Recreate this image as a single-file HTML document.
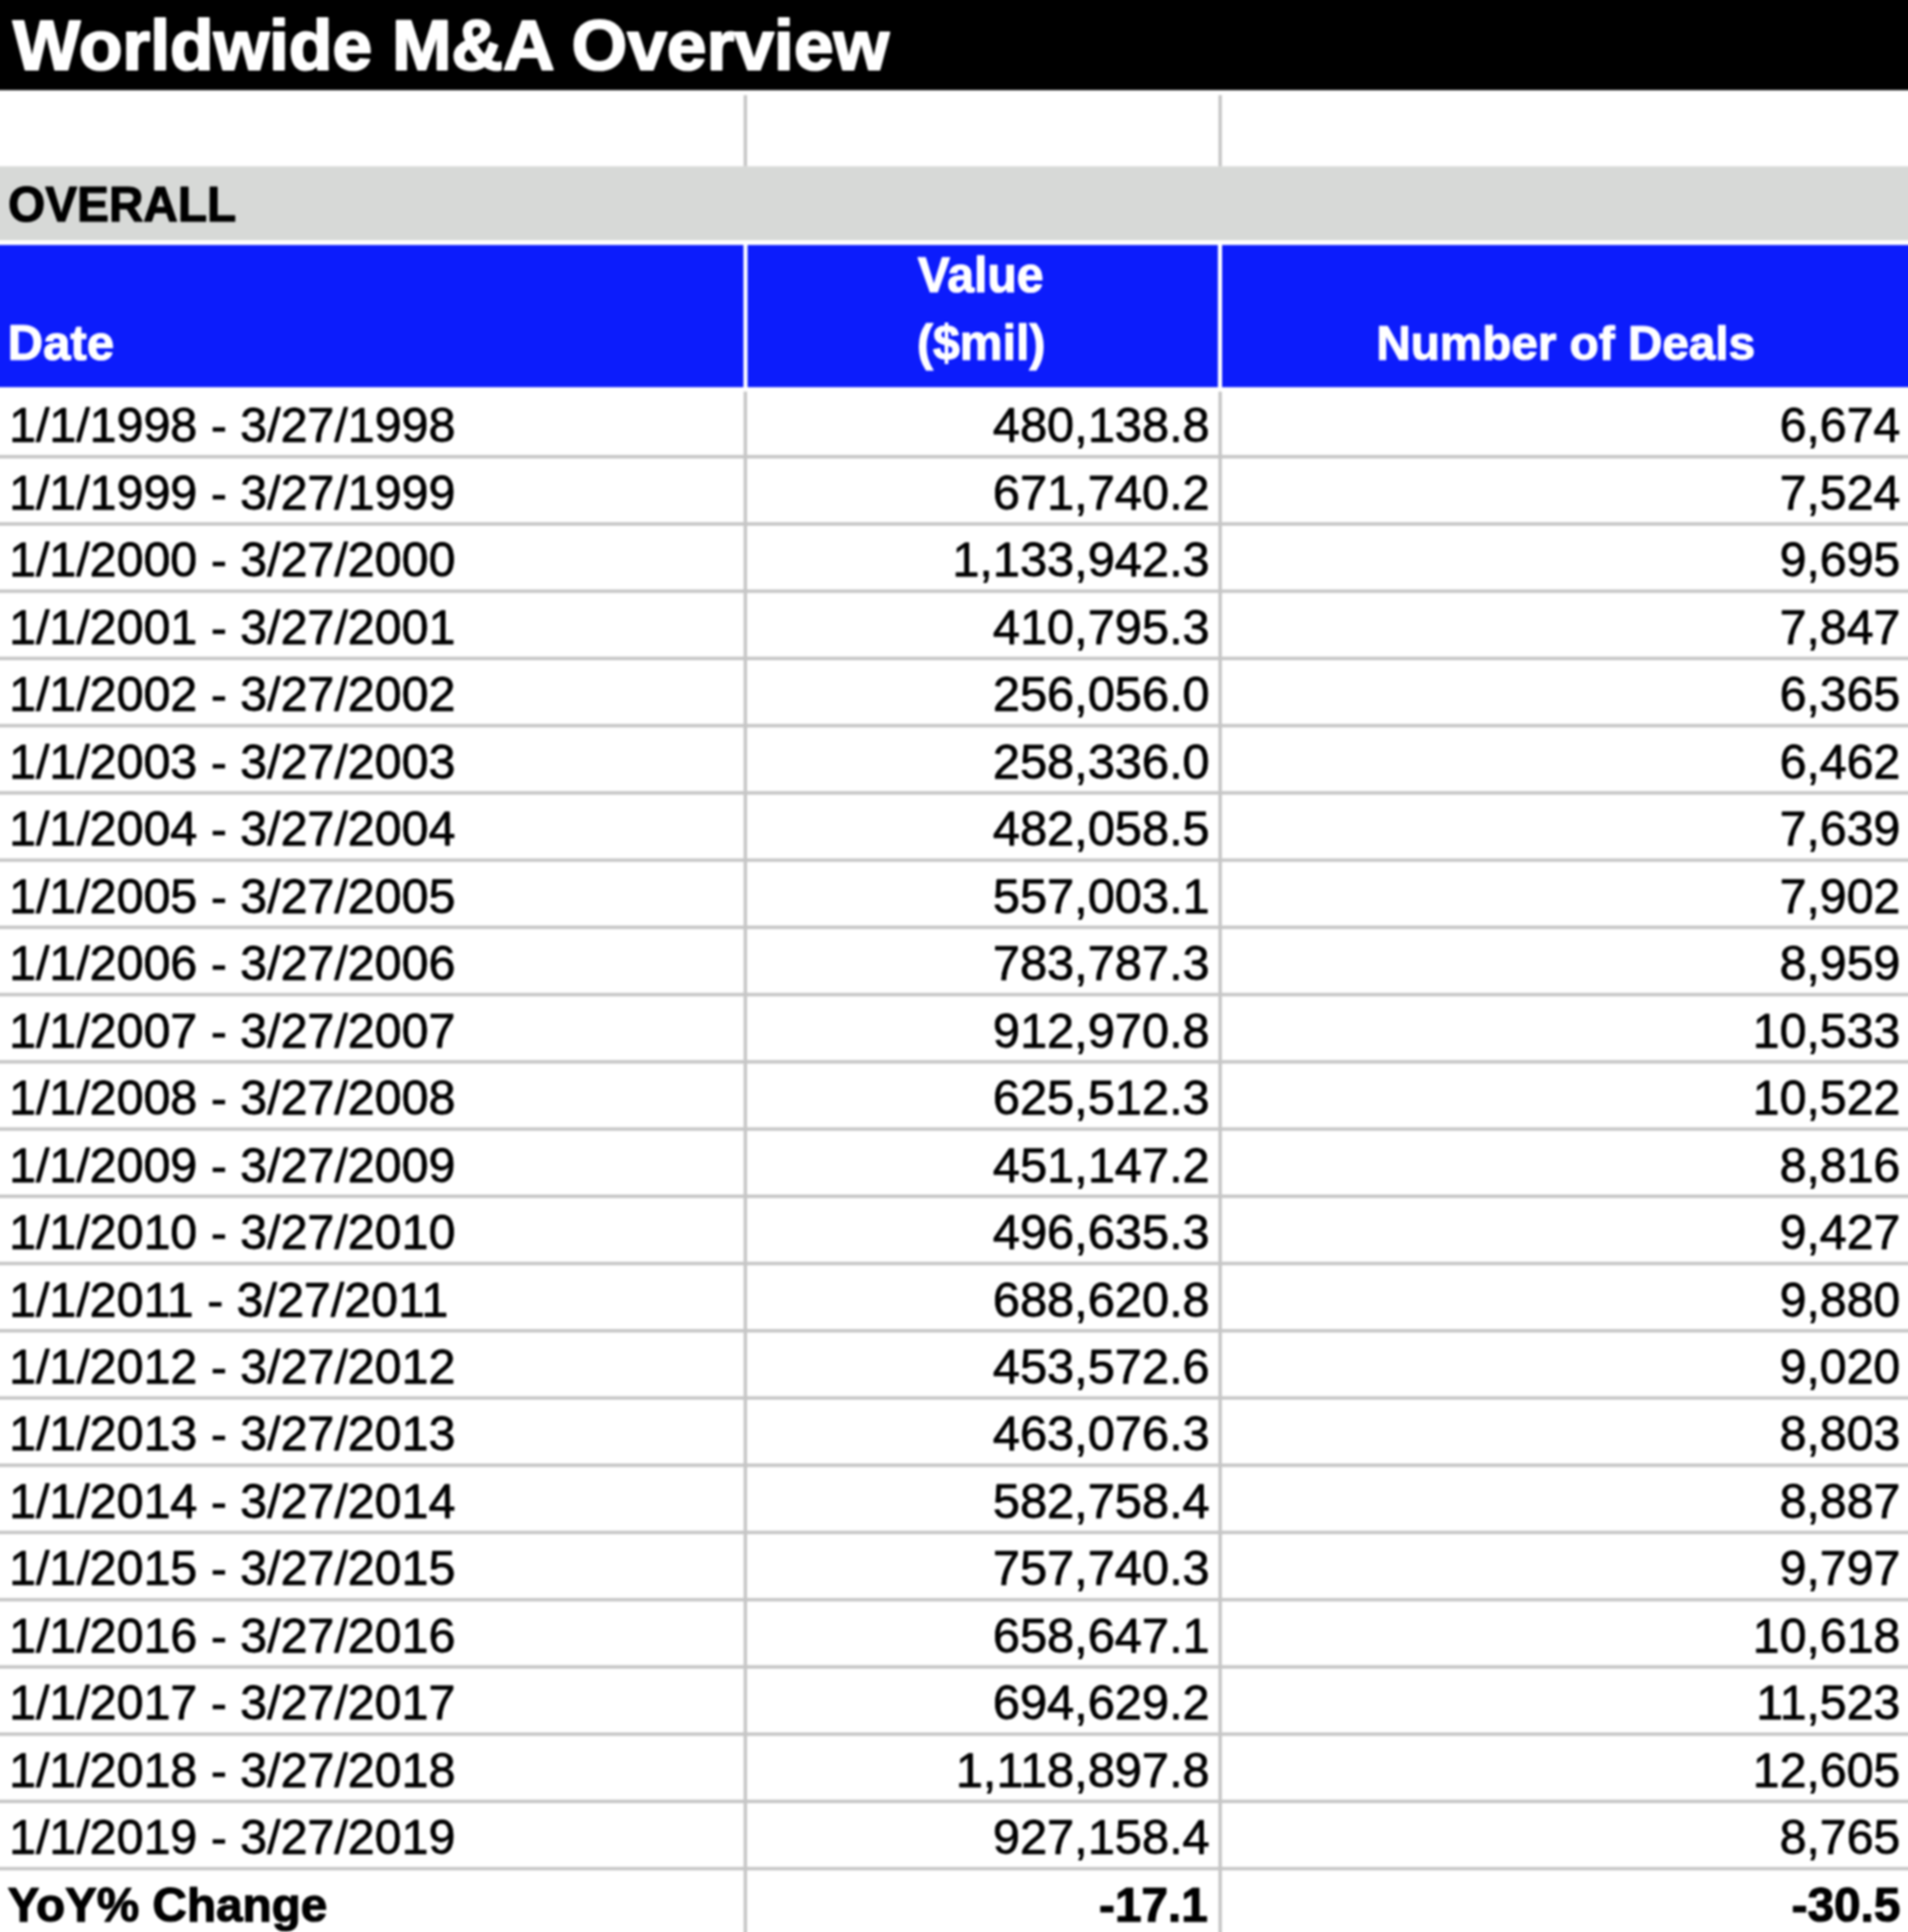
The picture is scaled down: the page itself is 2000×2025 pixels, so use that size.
<!DOCTYPE html>
<html><head><meta charset="utf-8"><style>
html,body{margin:0;padding:0;background:#fff;overflow:hidden;width:2000px;height:2025px}
#wrap{position:relative;width:2000px;height:2025px;overflow:hidden}
svg{display:block;position:absolute;left:-30px;top:-30px;filter:blur(1px)}
text{font-family:"Liberation Sans",sans-serif}
</style></head><body>
<div id="wrap">
<svg width="2060" height="2085" viewBox="-30 -30 2060 2085">
<rect x="-30" y="-30" width="2060" height="2085" fill="#fff"/>
<rect x="-30" y="-30" width="2060" height="124.5" fill="#000"/>
<rect x="-30" y="174.3" width="2060" height="77.5" fill="#d7d9d7"/>
<rect x="-30" y="256.8" width="809.3" height="149" fill="#0c1cfc"/>
<rect x="783.6" y="256.8" width="493" height="149" fill="#0c1cfc"/>
<rect x="1281" y="256.8" width="749" height="149" fill="#0c1cfc"/>
<rect x="779.5" y="99.7" width="3.6" height="74.6" fill="#c6c6c6"/>
<rect x="779.5" y="410.5" width="3.6" height="1644.5" fill="#c6c6c6"/>
<rect x="1277.2" y="99.7" width="3.6" height="74.6" fill="#c6c6c6"/>
<rect x="1277.2" y="410.5" width="3.6" height="1644.5" fill="#c6c6c6"/>
<rect x="-30" y="476.90" width="2060" height="3.6" fill="#c6c6c6"/>
<rect x="-30" y="547.37" width="2060" height="3.6" fill="#c6c6c6"/>
<rect x="-30" y="617.84" width="2060" height="3.6" fill="#c6c6c6"/>
<rect x="-30" y="688.31" width="2060" height="3.6" fill="#c6c6c6"/>
<rect x="-30" y="758.78" width="2060" height="3.6" fill="#c6c6c6"/>
<rect x="-30" y="829.25" width="2060" height="3.6" fill="#c6c6c6"/>
<rect x="-30" y="899.72" width="2060" height="3.6" fill="#c6c6c6"/>
<rect x="-30" y="970.19" width="2060" height="3.6" fill="#c6c6c6"/>
<rect x="-30" y="1040.66" width="2060" height="3.6" fill="#c6c6c6"/>
<rect x="-30" y="1111.13" width="2060" height="3.6" fill="#c6c6c6"/>
<rect x="-30" y="1181.60" width="2060" height="3.6" fill="#c6c6c6"/>
<rect x="-30" y="1252.07" width="2060" height="3.6" fill="#c6c6c6"/>
<rect x="-30" y="1322.54" width="2060" height="3.6" fill="#c6c6c6"/>
<rect x="-30" y="1393.01" width="2060" height="3.6" fill="#c6c6c6"/>
<rect x="-30" y="1463.48" width="2060" height="3.6" fill="#c6c6c6"/>
<rect x="-30" y="1533.95" width="2060" height="3.6" fill="#c6c6c6"/>
<rect x="-30" y="1604.42" width="2060" height="3.6" fill="#c6c6c6"/>
<rect x="-30" y="1674.89" width="2060" height="3.6" fill="#c6c6c6"/>
<rect x="-30" y="1745.36" width="2060" height="3.6" fill="#c6c6c6"/>
<rect x="-30" y="1815.83" width="2060" height="3.6" fill="#c6c6c6"/>
<rect x="-30" y="1886.30" width="2060" height="3.6" fill="#c6c6c6"/>
<rect x="-30" y="1956.77" width="2060" height="3.6" fill="#c6c6c6"/>
<text transform="translate(13.40 73.20) scale(1 1.0)" font-size="74.8" stroke="#fff" stroke-width="2.2" stroke-linejoin="round" font-weight="700" fill="#fff">Worldwide M&amp;A Overview</text>
<text transform="translate(8.60 231.50) scale(1 1.03)" font-size="50" stroke="#000" stroke-width="1.2" stroke-linejoin="round" font-weight="700">OVERALL</text>
<text transform="translate(1028.00 306.00) scale(1 1.017)" font-size="50.5" stroke="#fff" stroke-width="1.2" stroke-linejoin="round" font-weight="700" fill="#fff" text-anchor="middle">Value</text>
<text transform="translate(1028.50 376.70) scale(1 1.017)" font-size="50.5" stroke="#fff" stroke-width="1.2" stroke-linejoin="round" font-weight="700" fill="#fff" text-anchor="middle">($mil)</text>
<text transform="translate(8.00 376.70) scale(1 1.017)" font-size="51.5" stroke="#fff" stroke-width="1.2" stroke-linejoin="round" font-weight="700" fill="#fff">Date</text>
<text transform="translate(1641.20 376.70) scale(1 1.017)" font-size="50" stroke="#fff" stroke-width="1.2" stroke-linejoin="round" font-weight="700" fill="#fff" text-anchor="middle">Number of Deals</text>
<text transform="translate(9.50 463.40) scale(1 0.99)" font-size="50.7" stroke="#000" stroke-width="0.8" stroke-linejoin="round">1/1/1998 - 3/27/1998</text>
<text transform="translate(1268.00 463.40) scale(1 0.99)" font-size="51.1" stroke="#000" stroke-width="0.8" stroke-linejoin="round" text-anchor="end">480,138.8</text>
<text transform="translate(1992.00 463.40) scale(1 0.99)" font-size="50.6" stroke="#000" stroke-width="0.8" stroke-linejoin="round" text-anchor="end">6,674</text>
<text transform="translate(9.50 533.87) scale(1 0.99)" font-size="50.7" stroke="#000" stroke-width="0.8" stroke-linejoin="round">1/1/1999 - 3/27/1999</text>
<text transform="translate(1268.00 533.87) scale(1 0.99)" font-size="51.1" stroke="#000" stroke-width="0.8" stroke-linejoin="round" text-anchor="end">671,740.2</text>
<text transform="translate(1992.00 533.87) scale(1 0.99)" font-size="50.6" stroke="#000" stroke-width="0.8" stroke-linejoin="round" text-anchor="end">7,524</text>
<text transform="translate(9.50 604.34) scale(1 0.99)" font-size="50.7" stroke="#000" stroke-width="0.8" stroke-linejoin="round">1/1/2000 - 3/27/2000</text>
<text transform="translate(1268.00 604.34) scale(1 0.99)" font-size="51.1" stroke="#000" stroke-width="0.8" stroke-linejoin="round" text-anchor="end">1,133,942.3</text>
<text transform="translate(1992.00 604.34) scale(1 0.99)" font-size="50.6" stroke="#000" stroke-width="0.8" stroke-linejoin="round" text-anchor="end">9,695</text>
<text transform="translate(9.50 674.81) scale(1 0.99)" font-size="50.7" stroke="#000" stroke-width="0.8" stroke-linejoin="round">1/1/2001 - 3/27/2001</text>
<text transform="translate(1268.00 674.81) scale(1 0.99)" font-size="51.1" stroke="#000" stroke-width="0.8" stroke-linejoin="round" text-anchor="end">410,795.3</text>
<text transform="translate(1992.00 674.81) scale(1 0.99)" font-size="50.6" stroke="#000" stroke-width="0.8" stroke-linejoin="round" text-anchor="end">7,847</text>
<text transform="translate(9.50 745.28) scale(1 0.99)" font-size="50.7" stroke="#000" stroke-width="0.8" stroke-linejoin="round">1/1/2002 - 3/27/2002</text>
<text transform="translate(1268.00 745.28) scale(1 0.99)" font-size="51.1" stroke="#000" stroke-width="0.8" stroke-linejoin="round" text-anchor="end">256,056.0</text>
<text transform="translate(1992.00 745.28) scale(1 0.99)" font-size="50.6" stroke="#000" stroke-width="0.8" stroke-linejoin="round" text-anchor="end">6,365</text>
<text transform="translate(9.50 815.75) scale(1 0.99)" font-size="50.7" stroke="#000" stroke-width="0.8" stroke-linejoin="round">1/1/2003 - 3/27/2003</text>
<text transform="translate(1268.00 815.75) scale(1 0.99)" font-size="51.1" stroke="#000" stroke-width="0.8" stroke-linejoin="round" text-anchor="end">258,336.0</text>
<text transform="translate(1992.00 815.75) scale(1 0.99)" font-size="50.6" stroke="#000" stroke-width="0.8" stroke-linejoin="round" text-anchor="end">6,462</text>
<text transform="translate(9.50 886.22) scale(1 0.99)" font-size="50.7" stroke="#000" stroke-width="0.8" stroke-linejoin="round">1/1/2004 - 3/27/2004</text>
<text transform="translate(1268.00 886.22) scale(1 0.99)" font-size="51.1" stroke="#000" stroke-width="0.8" stroke-linejoin="round" text-anchor="end">482,058.5</text>
<text transform="translate(1992.00 886.22) scale(1 0.99)" font-size="50.6" stroke="#000" stroke-width="0.8" stroke-linejoin="round" text-anchor="end">7,639</text>
<text transform="translate(9.50 956.69) scale(1 0.99)" font-size="50.7" stroke="#000" stroke-width="0.8" stroke-linejoin="round">1/1/2005 - 3/27/2005</text>
<text transform="translate(1268.00 956.69) scale(1 0.99)" font-size="51.1" stroke="#000" stroke-width="0.8" stroke-linejoin="round" text-anchor="end">557,003.1</text>
<text transform="translate(1992.00 956.69) scale(1 0.99)" font-size="50.6" stroke="#000" stroke-width="0.8" stroke-linejoin="round" text-anchor="end">7,902</text>
<text transform="translate(9.50 1027.16) scale(1 0.99)" font-size="50.7" stroke="#000" stroke-width="0.8" stroke-linejoin="round">1/1/2006 - 3/27/2006</text>
<text transform="translate(1268.00 1027.16) scale(1 0.99)" font-size="51.1" stroke="#000" stroke-width="0.8" stroke-linejoin="round" text-anchor="end">783,787.3</text>
<text transform="translate(1992.00 1027.16) scale(1 0.99)" font-size="50.6" stroke="#000" stroke-width="0.8" stroke-linejoin="round" text-anchor="end">8,959</text>
<text transform="translate(9.50 1097.63) scale(1 0.99)" font-size="50.7" stroke="#000" stroke-width="0.8" stroke-linejoin="round">1/1/2007 - 3/27/2007</text>
<text transform="translate(1268.00 1097.63) scale(1 0.99)" font-size="51.1" stroke="#000" stroke-width="0.8" stroke-linejoin="round" text-anchor="end">912,970.8</text>
<text transform="translate(1992.00 1097.63) scale(1 0.99)" font-size="50.6" stroke="#000" stroke-width="0.8" stroke-linejoin="round" text-anchor="end">10,533</text>
<text transform="translate(9.50 1168.10) scale(1 0.99)" font-size="50.7" stroke="#000" stroke-width="0.8" stroke-linejoin="round">1/1/2008 - 3/27/2008</text>
<text transform="translate(1268.00 1168.10) scale(1 0.99)" font-size="51.1" stroke="#000" stroke-width="0.8" stroke-linejoin="round" text-anchor="end">625,512.3</text>
<text transform="translate(1992.00 1168.10) scale(1 0.99)" font-size="50.6" stroke="#000" stroke-width="0.8" stroke-linejoin="round" text-anchor="end">10,522</text>
<text transform="translate(9.50 1238.57) scale(1 0.99)" font-size="50.7" stroke="#000" stroke-width="0.8" stroke-linejoin="round">1/1/2009 - 3/27/2009</text>
<text transform="translate(1268.00 1238.57) scale(1 0.99)" font-size="51.1" stroke="#000" stroke-width="0.8" stroke-linejoin="round" text-anchor="end">451,147.2</text>
<text transform="translate(1992.00 1238.57) scale(1 0.99)" font-size="50.6" stroke="#000" stroke-width="0.8" stroke-linejoin="round" text-anchor="end">8,816</text>
<text transform="translate(9.50 1309.04) scale(1 0.99)" font-size="50.7" stroke="#000" stroke-width="0.8" stroke-linejoin="round">1/1/2010 - 3/27/2010</text>
<text transform="translate(1268.00 1309.04) scale(1 0.99)" font-size="51.1" stroke="#000" stroke-width="0.8" stroke-linejoin="round" text-anchor="end">496,635.3</text>
<text transform="translate(1992.00 1309.04) scale(1 0.99)" font-size="50.6" stroke="#000" stroke-width="0.8" stroke-linejoin="round" text-anchor="end">9,427</text>
<text transform="translate(9.50 1379.51) scale(1 0.99)" font-size="50.7" stroke="#000" stroke-width="0.8" stroke-linejoin="round">1/1/2011 - 3/27/2011</text>
<text transform="translate(1268.00 1379.51) scale(1 0.99)" font-size="51.1" stroke="#000" stroke-width="0.8" stroke-linejoin="round" text-anchor="end">688,620.8</text>
<text transform="translate(1992.00 1379.51) scale(1 0.99)" font-size="50.6" stroke="#000" stroke-width="0.8" stroke-linejoin="round" text-anchor="end">9,880</text>
<text transform="translate(9.50 1449.98) scale(1 0.99)" font-size="50.7" stroke="#000" stroke-width="0.8" stroke-linejoin="round">1/1/2012 - 3/27/2012</text>
<text transform="translate(1268.00 1449.98) scale(1 0.99)" font-size="51.1" stroke="#000" stroke-width="0.8" stroke-linejoin="round" text-anchor="end">453,572.6</text>
<text transform="translate(1992.00 1449.98) scale(1 0.99)" font-size="50.6" stroke="#000" stroke-width="0.8" stroke-linejoin="round" text-anchor="end">9,020</text>
<text transform="translate(9.50 1520.45) scale(1 0.99)" font-size="50.7" stroke="#000" stroke-width="0.8" stroke-linejoin="round">1/1/2013 - 3/27/2013</text>
<text transform="translate(1268.00 1520.45) scale(1 0.99)" font-size="51.1" stroke="#000" stroke-width="0.8" stroke-linejoin="round" text-anchor="end">463,076.3</text>
<text transform="translate(1992.00 1520.45) scale(1 0.99)" font-size="50.6" stroke="#000" stroke-width="0.8" stroke-linejoin="round" text-anchor="end">8,803</text>
<text transform="translate(9.50 1590.92) scale(1 0.99)" font-size="50.7" stroke="#000" stroke-width="0.8" stroke-linejoin="round">1/1/2014 - 3/27/2014</text>
<text transform="translate(1268.00 1590.92) scale(1 0.99)" font-size="51.1" stroke="#000" stroke-width="0.8" stroke-linejoin="round" text-anchor="end">582,758.4</text>
<text transform="translate(1992.00 1590.92) scale(1 0.99)" font-size="50.6" stroke="#000" stroke-width="0.8" stroke-linejoin="round" text-anchor="end">8,887</text>
<text transform="translate(9.50 1661.39) scale(1 0.99)" font-size="50.7" stroke="#000" stroke-width="0.8" stroke-linejoin="round">1/1/2015 - 3/27/2015</text>
<text transform="translate(1268.00 1661.39) scale(1 0.99)" font-size="51.1" stroke="#000" stroke-width="0.8" stroke-linejoin="round" text-anchor="end">757,740.3</text>
<text transform="translate(1992.00 1661.39) scale(1 0.99)" font-size="50.6" stroke="#000" stroke-width="0.8" stroke-linejoin="round" text-anchor="end">9,797</text>
<text transform="translate(9.50 1731.86) scale(1 0.99)" font-size="50.7" stroke="#000" stroke-width="0.8" stroke-linejoin="round">1/1/2016 - 3/27/2016</text>
<text transform="translate(1268.00 1731.86) scale(1 0.99)" font-size="51.1" stroke="#000" stroke-width="0.8" stroke-linejoin="round" text-anchor="end">658,647.1</text>
<text transform="translate(1992.00 1731.86) scale(1 0.99)" font-size="50.6" stroke="#000" stroke-width="0.8" stroke-linejoin="round" text-anchor="end">10,618</text>
<text transform="translate(9.50 1802.33) scale(1 0.99)" font-size="50.7" stroke="#000" stroke-width="0.8" stroke-linejoin="round">1/1/2017 - 3/27/2017</text>
<text transform="translate(1268.00 1802.33) scale(1 0.99)" font-size="51.1" stroke="#000" stroke-width="0.8" stroke-linejoin="round" text-anchor="end">694,629.2</text>
<text transform="translate(1992.00 1802.33) scale(1 0.99)" font-size="50.6" stroke="#000" stroke-width="0.8" stroke-linejoin="round" text-anchor="end">11,523</text>
<text transform="translate(9.50 1872.80) scale(1 0.99)" font-size="50.7" stroke="#000" stroke-width="0.8" stroke-linejoin="round">1/1/2018 - 3/27/2018</text>
<text transform="translate(1268.00 1872.80) scale(1 0.99)" font-size="51.1" stroke="#000" stroke-width="0.8" stroke-linejoin="round" text-anchor="end">1,118,897.8</text>
<text transform="translate(1992.00 1872.80) scale(1 0.99)" font-size="50.6" stroke="#000" stroke-width="0.8" stroke-linejoin="round" text-anchor="end">12,605</text>
<text transform="translate(9.50 1943.27) scale(1 0.99)" font-size="50.7" stroke="#000" stroke-width="0.8" stroke-linejoin="round">1/1/2019 - 3/27/2019</text>
<text transform="translate(1268.00 1943.27) scale(1 0.99)" font-size="51.1" stroke="#000" stroke-width="0.8" stroke-linejoin="round" text-anchor="end">927,158.4</text>
<text transform="translate(1992.00 1943.27) scale(1 0.99)" font-size="50.6" stroke="#000" stroke-width="0.8" stroke-linejoin="round" text-anchor="end">8,765</text>
<text transform="translate(8.00 2013.74) scale(1 1.017)" font-size="50" stroke="#000" stroke-width="1.2" stroke-linejoin="round" font-weight="700">YoY% Change</text>
<text transform="translate(1266.00 2013.74) scale(1 1.017)" font-size="50" stroke="#000" stroke-width="1.2" stroke-linejoin="round" font-weight="700" text-anchor="end">-17.1</text>
<text transform="translate(1992.00 2013.74) scale(1 1.017)" font-size="50" stroke="#000" stroke-width="1.2" stroke-linejoin="round" font-weight="700" text-anchor="end">-30.5</text>
</svg>
</div>
</body></html>
